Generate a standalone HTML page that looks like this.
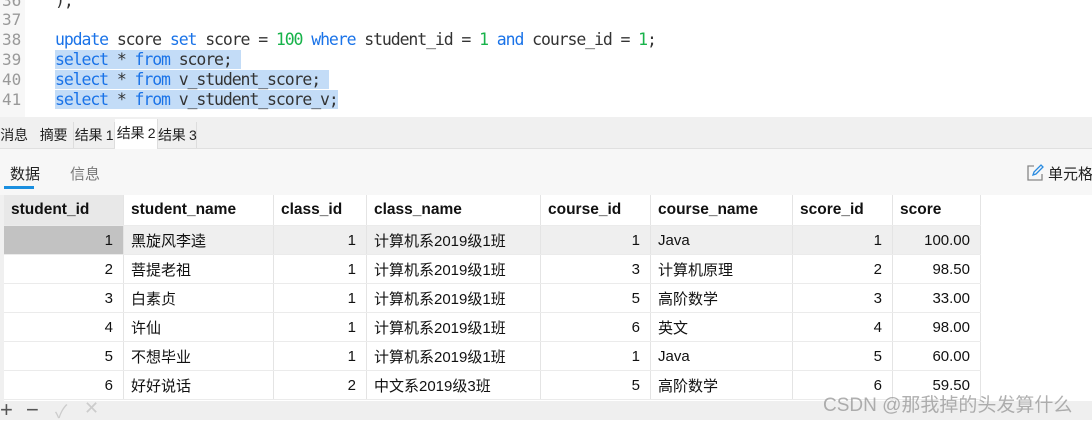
<!DOCTYPE html><html><head><meta charset="utf-8"><style>
body{margin:0;width:1092px;height:420px;overflow:hidden;background:#fff;font-family:"Liberation Sans","Noto Sans CJK SC",sans-serif;position:relative}
.ed{position:absolute;left:0;top:0;width:1092px;height:117px;background:#fff}
.gut{position:absolute;left:0;top:0;width:25px;height:117px;background:#f7f7f7}
.ln{position:absolute;left:0;width:32px;text-align:left;padding-left:2px;color:#999;font:16px "DejaVu Sans Mono",monospace}
.cd{position:absolute;left:55px;font:16.5px "DejaVu Sans Mono",monospace;color:#333;white-space:pre;letter-spacing:-1.1px}
.k{color:#1a73e8}.n{color:#17b34a}.sel{background:#c3dcf7}
.tabs{position:absolute;top:117px;left:0;width:1092px;height:31px;background:#f0f0f0;border-bottom:1px solid #e0e0e0}
.tab{position:absolute;top:5px;height:26px;line-height:26px;font-size:14px;color:#222;border-right:1px solid #ddd;background:#f0f0f0;text-align:center;white-space:nowrap;letter-spacing:-0.3px}
.sub{position:absolute;top:149px;left:0;width:1092px;height:46px;background:#f7f7f7}
table{position:absolute;left:4px;top:195px;border-collapse:collapse;font-size:15px;color:#111}
td,th{height:28px;padding:0 7px;border-right:1px solid #e4e4e4;border-bottom:1px solid #ebebeb;white-space:nowrap}
th{height:30px;text-align:left;font-weight:bold;background:#fff;font-size:15.5px}
td.r{text-align:right;padding-right:10px}
.bot{position:absolute;top:401px;left:0;width:1092px;height:19px;background:#efefef}
</style></head><body>
<div class="ed"><div class="gut"></div>
<div class="ln" style="top:-9px">36</div><div class="ln" style="top:10px">37</div><div class="ln" style="top:30px">38</div><div class="ln" style="top:50px">39</div><div class="ln" style="top:70px">40</div><div class="ln" style="top:90px">41</div>
<div class="cd" style="top:-9px">);</div>
<div class="cd" style="top:30px"><span class="k">update</span> score <span class="k">set</span> score = <span class="n">100</span> <span class="k">where</span> student_id = <span class="n">1</span> <span class="k">and</span> course_id = <span class="n">1</span>;</div>
<div class="cd" style="top:50px"><span class="sel"><span class="k">select</span> * <span class="k">from</span> score; </span></div>
<div class="cd" style="top:70px"><span class="sel"><span class="k">select</span> * <span class="k">from</span> v_student_score; </span></div>
<div class="cd" style="top:90px"><span class="sel"><span class="k">select</span> * <span class="k">from</span> v_student_score_v;</span></div>
</div>
<div class="tabs">
<div class="tab" style="left:-6px;width:40px">消息</div>
<div class="tab" style="left:34px;width:39px">摘要</div>
<div class="tab" style="left:74px;width:40px">结果 1</div>
<div class="tab" style="left:115px;width:42px;top:2px;height:30px;line-height:28px;background:#fff">结果 2</div>
<div class="tab" style="left:158px;width:38px">结果 3</div>
</div>
<div class="sub">
<div style="position:absolute;left:10px;top:14px;font-size:15px;color:#222">数据</div>
<div style="position:absolute;left:4px;top:37px;width:30px;height:3px;background:#1a8fe0"></div>
<div style="position:absolute;left:70px;top:14px;font-size:15px;color:#777">信息</div>
<svg style="position:absolute;left:1025px;top:13px" width="20" height="20" viewBox="0 0 20 20"><path d="M9 4H3v14h14v-6" fill="none" stroke="#888" stroke-width="1.3"/><path d="M8 13l1-3 7-7 2 2-7 7z" fill="none" stroke="#2a8be0" stroke-width="1.3"/></svg>
<div style="position:absolute;left:1048px;top:14px;font-size:15px;color:#222;white-space:nowrap">单元格</div>
</div>
<table>
<tr><th style="width:105px;background:#e8e8e8">student_id</th><th style="width:135px">student_name</th><th style="width:78px">class_id</th><th style="width:159px">class_name</th><th style="width:95px">course_id</th><th style="width:127px">course_name</th><th style="width:85px">score_id</th><th style="width:73px">score</th></tr>
<tr style="background:#efefef"><td class="r" style="background:#c2c2c2">1</td><td>黑旋风李逵</td><td class="r">1</td><td>计算机系2019级1班</td><td class="r">1</td><td>Java</td><td class="r">1</td><td class="r">100.00</td></tr>
<tr><td class="r">2</td><td>菩提老祖</td><td class="r">1</td><td>计算机系2019级1班</td><td class="r">3</td><td>计算机原理</td><td class="r">2</td><td class="r">98.50</td></tr>
<tr><td class="r">3</td><td>白素贞</td><td class="r">1</td><td>计算机系2019级1班</td><td class="r">5</td><td>高阶数学</td><td class="r">3</td><td class="r">33.00</td></tr>
<tr><td class="r">4</td><td>许仙</td><td class="r">1</td><td>计算机系2019级1班</td><td class="r">6</td><td>英文</td><td class="r">4</td><td class="r">98.00</td></tr>
<tr><td class="r">5</td><td>不想毕业</td><td class="r">1</td><td>计算机系2019级1班</td><td class="r">1</td><td>Java</td><td class="r">5</td><td class="r">60.00</td></tr>
<tr><td class="r">6</td><td>好好说话</td><td class="r">2</td><td>中文系2019级3班</td><td class="r">5</td><td>高阶数学</td><td class="r">6</td><td class="r">59.50</td></tr>
</table>
<div style="position:absolute;left:0;top:195px;width:4px;height:206px;background:#f0f0f0"></div>
<div class="bot"><span style="position:absolute;left:0;top:-4px;font-size:22px;color:#555">+</span><span style="position:absolute;left:26px;top:-4px;font-size:22px;color:#555">−</span><span style="position:absolute;left:55px;top:-3px;font-size:18px;color:#ccc">✓</span><span style="position:absolute;left:84px;top:-3px;font-size:18px;color:#ccc">✕</span></div>
<div style="position:absolute;left:823px;top:390px;font-size:19px;color:rgba(150,150,150,0.75)">CSDN @那我掉的头发算什么</div>
</body></html>
